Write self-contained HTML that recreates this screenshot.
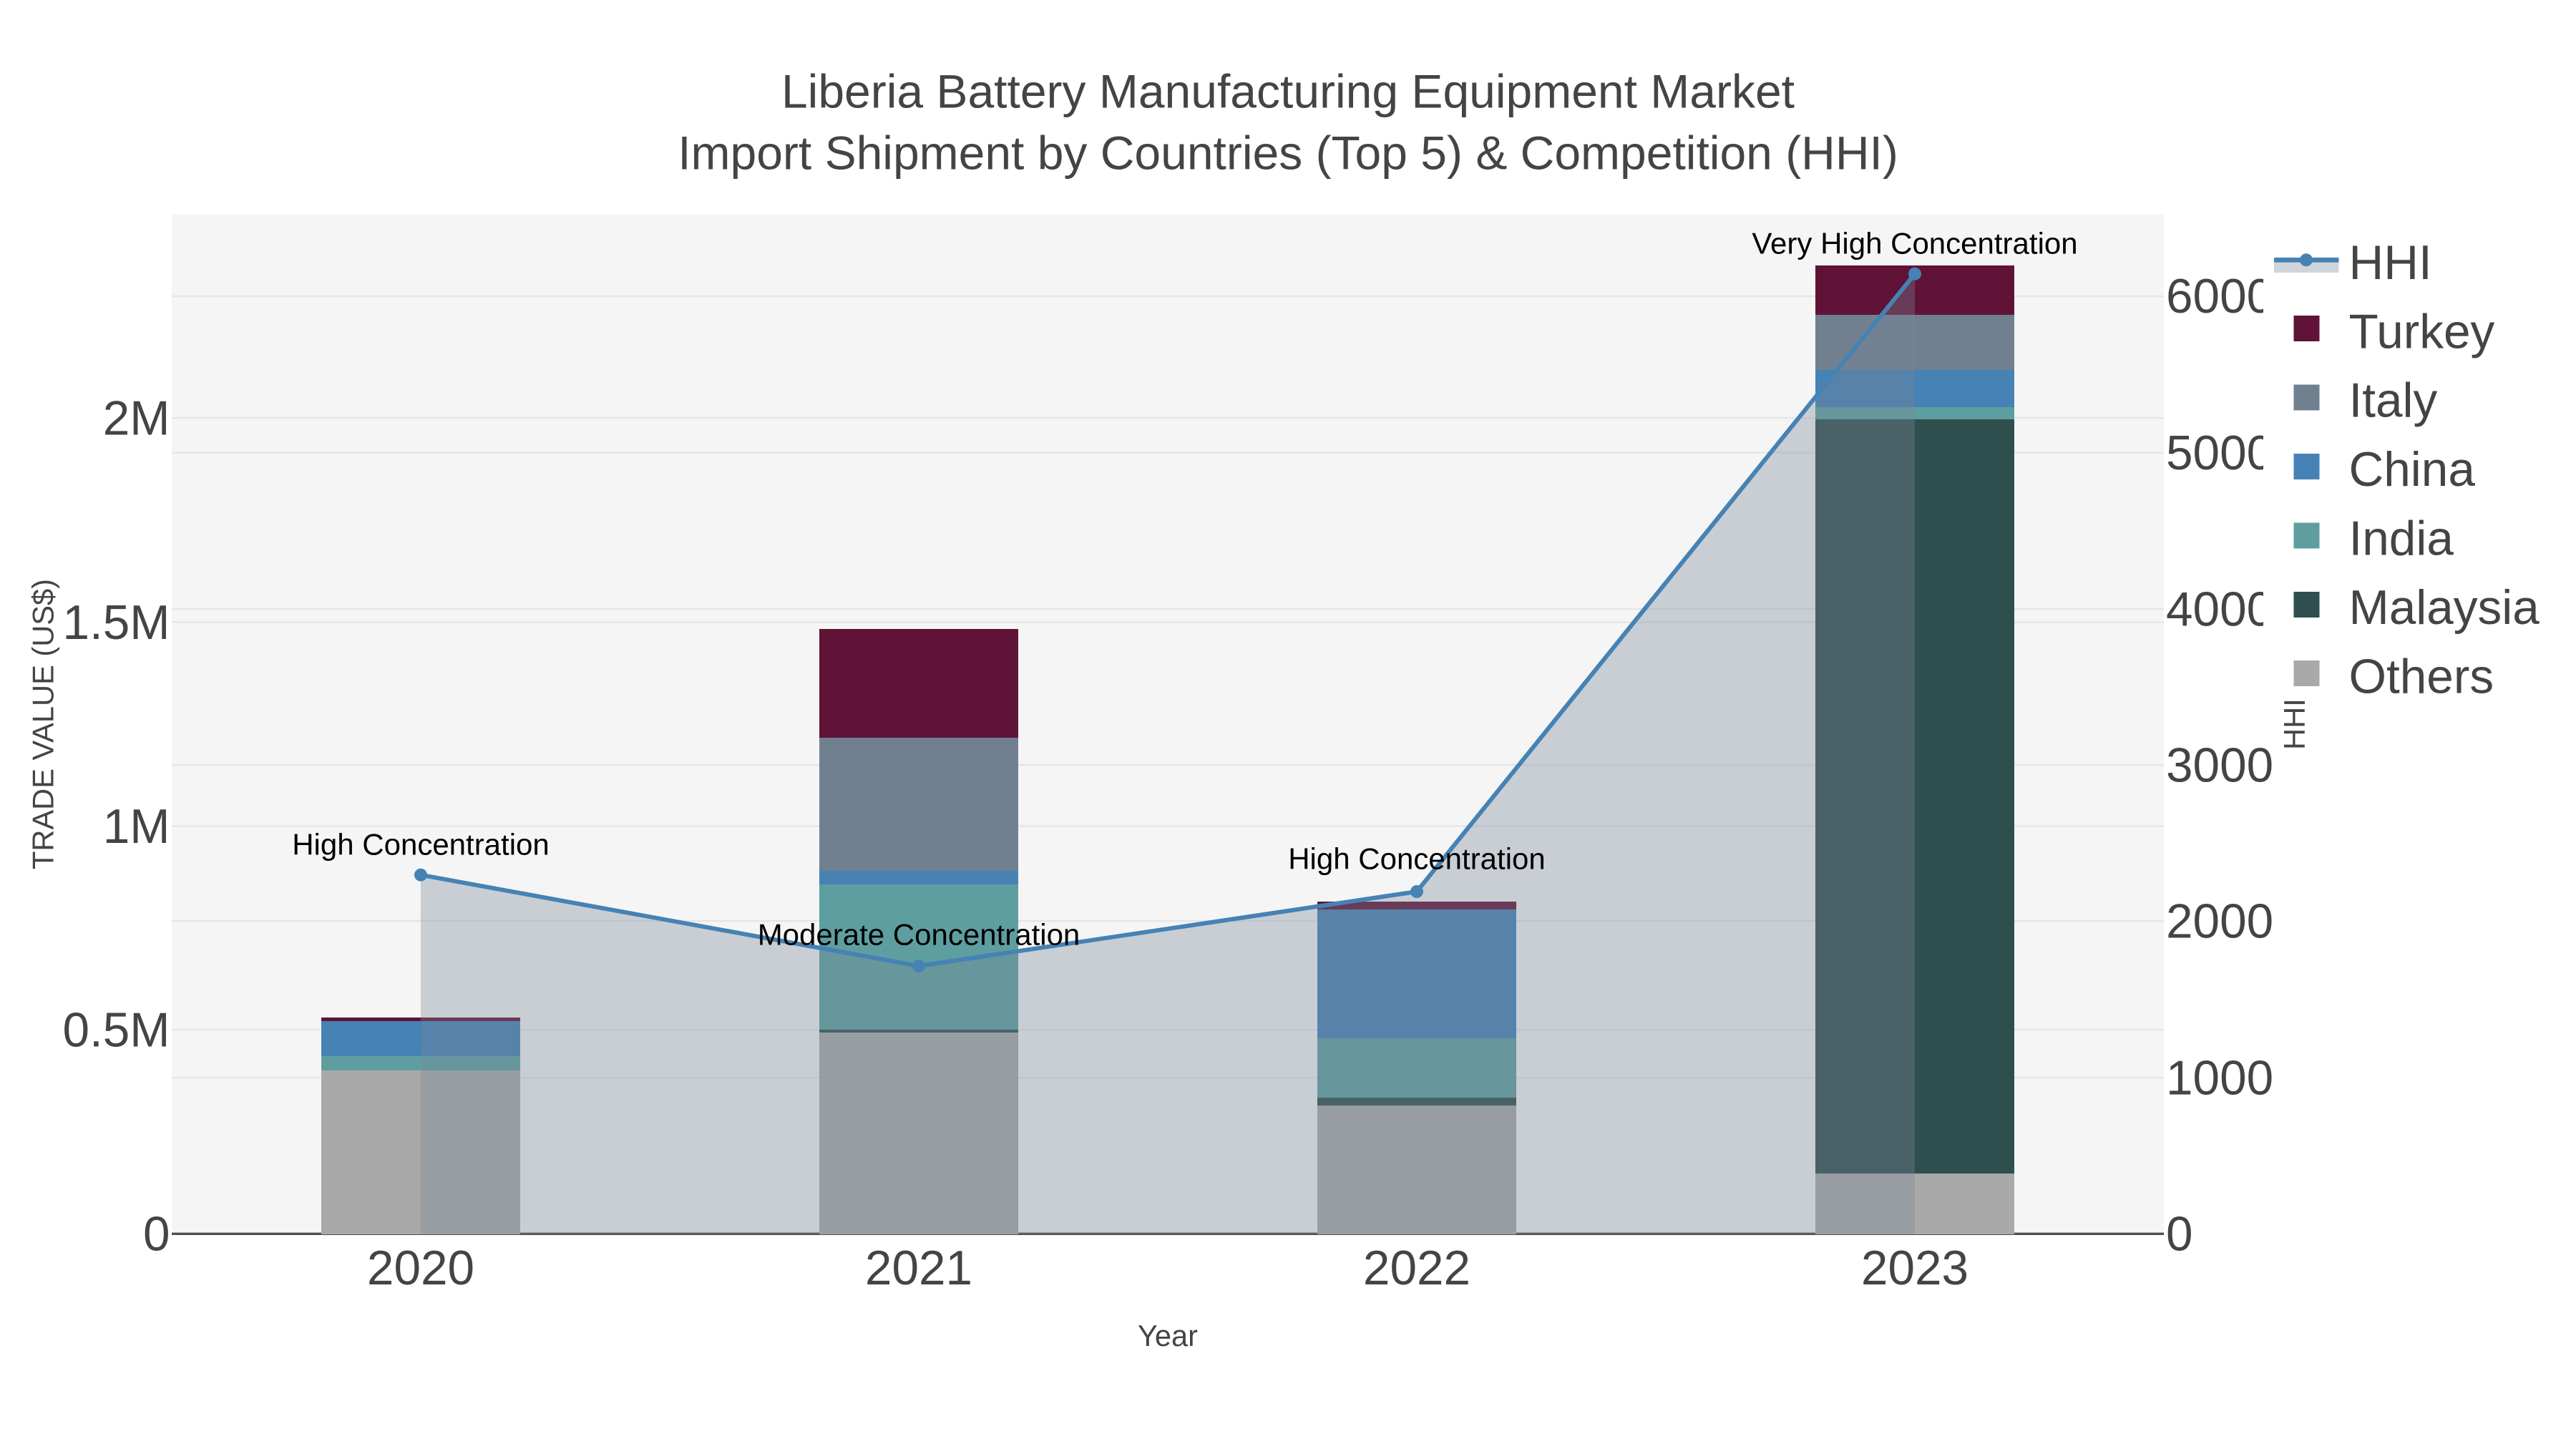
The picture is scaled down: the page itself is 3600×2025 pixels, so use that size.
<!DOCTYPE html>
<html lang="en">
<head>
<meta charset="utf-8">
<title>Liberia Battery Manufacturing Equipment Market</title>
<style>
html,body{margin:0;padding:0;background:#fff;width:3600px;height:2025px;overflow:hidden}
svg{display:block}
text{font-family:"Liberation Sans",Arial,sans-serif;fill:#444}
.t{font-size:67.5px}
.l{font-size:67.5px}
.a{font-size:42px;fill:#000;text-anchor:middle}
.g{stroke:#e6e6e6;stroke-width:2.4;fill:none}
</style>
</head>
<body>
<svg width="3600" height="2025" viewBox="0 0 3600 2025" xmlns="http://www.w3.org/2000/svg">
<rect width="3600" height="2025" fill="#fff"/>
<rect x="240" y="300" width="2784" height="1424" fill="#f5f5f5"/>

<!-- grid -->
<path class="g" d="M240 1439H3024M240 1154.5H3024M240 869.5H3024M240 584H3024"/>
<path class="g" d="M240 1506H3024M240 1287H3024M240 1069H3024M240 851H3024M240 632.5H3024M240 414H3024"/>

<!-- x axis line -->
<rect x="240" y="1722.6" width="2784" height="3.4" fill="#505050"/>

<!-- bars 2020 -->
<g shape-rendering="crispEdges">
<rect x="449" y="1496" width="278" height="229" fill="#a9a9a9"/>
<rect x="449" y="1476" width="278" height="20" fill="#5f9ea0"/>
<rect x="449" y="1427" width="278" height="49" fill="#4682b4"/>
<rect x="449" y="1422" width="278" height="5" fill="#601336"/>
<!-- 2021 -->
<rect x="1145" y="1443" width="278" height="282" fill="#a9a9a9"/>
<rect x="1145" y="1439" width="278" height="4" fill="#2f4f4f"/>
<rect x="1145" y="1236" width="278" height="203" fill="#5f9ea0"/>
<rect x="1145" y="1217" width="278" height="19" fill="#4682b4"/>
<rect x="1145" y="1031" width="278" height="186" fill="#708090"/>
<rect x="1145" y="879" width="278" height="152" fill="#601336"/>
<!-- 2022 -->
<rect x="1841" y="1545" width="278" height="180" fill="#a9a9a9"/>
<rect x="1841" y="1534" width="278" height="11" fill="#2f4f4f"/>
<rect x="1841" y="1451" width="278" height="83" fill="#5f9ea0"/>
<rect x="1841" y="1271" width="278" height="180" fill="#4682b4"/>
<rect x="1841" y="1260" width="278" height="11" fill="#601336"/>
<!-- 2023 -->
<rect x="2537" y="1640" width="278" height="85" fill="#a9a9a9"/>
<rect x="2537" y="586" width="278" height="1054" fill="#2f4f4f"/>
<rect x="2537" y="569" width="278" height="17" fill="#5f9ea0"/>
<rect x="2537" y="517" width="278" height="52" fill="#4682b4"/>
<rect x="2537" y="440" width="278" height="77" fill="#708090"/>
<rect x="2537" y="371" width="278" height="69" fill="#601336"/>
</g>

<!-- HHI area + line -->
<path d="M588 1222.7L1284 1350L1980 1246L2676 382.7V1724.5H588Z" fill="#778899" fill-opacity="0.35"/>
<path d="M588 1222.7L1284 1350L1980 1246L2676 382.7" fill="none" stroke="#4682b4" stroke-width="6" stroke-linejoin="round"/>
<circle cx="588" cy="1222.7" r="9" fill="#4682b4"/>
<circle cx="1284" cy="1350" r="9" fill="#4682b4"/>
<circle cx="1980" cy="1246" r="9" fill="#4682b4"/>
<circle cx="2676" cy="382.7" r="9" fill="#4682b4"/>

<!-- annotations -->
<text class="a" x="588" y="1194.5">High Concentration</text>
<text class="a" x="1284" y="1320.7">Moderate Concentration</text>
<text class="a" x="1980" y="1214.5">High Concentration</text>
<text class="a" x="2676" y="354.6">Very High Concentration</text>

<!-- left ticks -->
<g class="t" text-anchor="end">
<text x="237.5" y="1747.5">0</text>
<text x="237.5" y="1462.5">0.5M</text>
<text x="237.5" y="1178">1M</text>
<text x="237.5" y="893">1.5M</text>
<text x="237.5" y="607.5">2M</text>
</g>

<!-- x ticks -->
<g class="t" text-anchor="middle">
<text x="588" y="1795">2020</text>
<text x="1284" y="1795">2021</text>
<text x="1980" y="1795">2022</text>
<text x="2676" y="1795">2023</text>
</g>

<!-- right ticks -->
<g class="t">
<text x="3027" y="1747.5">0</text>
<text x="3027" y="1529.5">1000</text>
<text x="3027" y="1310.5">2000</text>
<text x="3027" y="1092.5">3000</text>
<text x="3027" y="874.5">4000</text>
<text x="3027" y="656">5000</text>
<text x="3027" y="437">6000</text>
</g>

<!-- legend background clips right ticks -->
<rect x="3163" y="320" width="437" height="660" fill="#fff"/>

<!-- axis titles -->
<text x="1632" y="1881" font-size="41.6" text-anchor="middle">Year</text>
<text transform="translate(74.5 1012) rotate(-90)" font-size="41.6" text-anchor="middle">TRADE VALUE (US$)</text>
<text transform="translate(3221 1012) rotate(-90)" font-size="41.6" text-anchor="middle">HHI</text>

<!-- title -->
<text x="1800" y="150.5" font-size="66" text-anchor="middle">Liberia Battery Manufacturing Equipment Market</text>
<text x="1800" y="236.5" font-size="66" text-anchor="middle">Import Shipment by Countries (Top 5) &amp; Competition (HHI)</text>

<!-- legend -->
<rect x="3178" y="363" width="90.5" height="18" fill="#778899" fill-opacity="0.35"/>
<rect x="3178" y="360" width="90.5" height="6.7" fill="#4682b4"/>
<circle cx="3223" cy="363.3" r="9" fill="#4682b4"/>
<g shape-rendering="crispEdges">
<rect x="3205.5" y="441" width="36" height="36" fill="#601336"/>
<rect x="3205.5" y="537.5" width="36" height="36" fill="#708090"/>
<rect x="3205.5" y="634" width="36" height="36" fill="#4682b4"/>
<rect x="3205.5" y="730.5" width="36" height="36" fill="#5f9ea0"/>
<rect x="3205.5" y="827" width="36" height="36" fill="#2f4f4f"/>
<rect x="3205.5" y="923" width="36" height="36" fill="#a9a9a9"/>
</g>
<g class="l">
<text x="3282.5" y="390">HHI</text>
<text x="3282.5" y="486.5">Turkey</text>
<text x="3282.5" y="582.5">Italy</text>
<text x="3282.5" y="679">China</text>
<text x="3282.5" y="775.5">India</text>
<text x="3282.5" y="872">Malaysia</text>
<text x="3282.5" y="968.5">Others</text>
</g>
</svg>
</body>
</html>
